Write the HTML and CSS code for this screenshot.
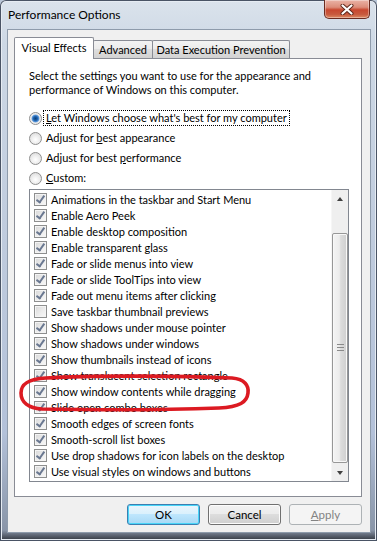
FILE: index.html
```html
<!DOCTYPE html>
<html>
<head>
<meta charset="utf-8">
<title>Performance Options</title>
<link rel="stylesheet" href="styles.css">
</head>
<body>
<div class="window">
  <div class="titlebar">
    <span class="title">Performance Options</span>
    <div class="close">
      <svg width="14" height="11" viewBox="0 0 14 11">
        <path d="M2.5 1.5 L11.5 9.5 M11.5 1.5 L2.5 9.5" stroke="#5a2418" stroke-width="4" stroke-linecap="round"/>
        <path d="M2.5 1.5 L11.5 9.5 M11.5 1.5 L2.5 9.5" stroke="#ffffff" stroke-width="2.2" stroke-linecap="round"/>
      </svg>
    </div>
  </div>
  <div class="client">
    <div class="tabs">
      <div class="tab selected tab-visual">Visual Effects</div>
      <div class="tab tab-adv">Advanced</div>
      <div class="tab tab-dep">Data Execution Prevention</div>
    </div>
    <div class="panel">
      <p class="intro">Select the settings you want to use for the appearance and performance of Windows on this computer.</p>
      <div class="radios">
        <div class="radio-row"><span class="radio checked"></span><span class="rlabel focus"><u>L</u>et Windows choose what's best for my computer</span></div>
        <div class="radio-row"><span class="radio"></span><span class="rlabel">Adjust for <u>b</u>est appearance</span></div>
        <div class="radio-row"><span class="radio"></span><span class="rlabel">Adjust for best <u>p</u>erformance</span></div>
        <div class="radio-row"><span class="radio"></span><span class="rlabel"><u>C</u>ustom:</span></div>
      </div>
      <div class="listbox">
        <div class="items">
          <div class="item"><span class="cb on"></span>Animations in the taskbar and Start Menu</div>
          <div class="item"><span class="cb on"></span>Enable Aero Peek</div>
          <div class="item"><span class="cb on"></span>Enable desktop composition</div>
          <div class="item"><span class="cb on"></span>Enable transparent glass</div>
          <div class="item"><span class="cb on"></span>Fade or slide menus into view</div>
          <div class="item"><span class="cb on"></span>Fade or slide ToolTips into view</div>
          <div class="item"><span class="cb on"></span>Fade out menu items after clicking</div>
          <div class="item"><span class="cb"></span>Save taskbar thumbnail previews</div>
          <div class="item"><span class="cb on"></span>Show shadows under mouse pointer</div>
          <div class="item"><span class="cb on"></span>Show shadows under windows</div>
          <div class="item"><span class="cb on"></span>Show thumbnails instead of icons</div>
          <div class="item"><span class="cb on"></span>Show translucent selection rectangle</div>
          <div class="item"><span class="cb on"></span>Show window contents while dragging</div>
          <div class="item"><span class="cb on"></span>Slide open combo boxes</div>
          <div class="item"><span class="cb on"></span>Smooth edges of screen fonts</div>
          <div class="item"><span class="cb on"></span>Smooth-scroll list boxes</div>
          <div class="item"><span class="cb on"></span>Use drop shadows for icon labels on the desktop</div>
          <div class="item"><span class="cb on"></span>Use visual styles on windows and buttons</div>
        </div>
        <div class="scrollbar">
          <div class="arrow"><span class="tri up"></span></div>
          <div class="track">
            <div class="thumb"><span class="grip"></span></div>
          </div>
          <div class="arrow"><span class="tri down"></span></div>
        </div>
      </div>
    </div>
    <div class="buttons">
      <div class="btn default">OK</div>
      <div class="btn">Cancel</div>
      <div class="btn disabled"><u>A</u>pply</div>
    </div>
  </div>
  <svg class="circle" width="240" height="42" viewBox="0 0 240 42">
    <path d="M30 6 C80 3 170 4 216 6 C229 7 233 14 232 21 C231 30 224 35 203 36 C150 38 80 38 26 37 C12 36 5 30 5 21 C5 12 12 7 30 6 Z" fill="none" stroke="#dc1a22" stroke-width="3.6"/>
  </svg>
</div>
</body>
</html>
```
FILE: styles.css
```css
html, body {
  margin: 0;
  padding: 0;
}
body {
  width: 377px;
  height: 541px;
  overflow: hidden;
  font-family: Lato, "Liberation Sans", sans-serif;
  font-size: 11px;
  color: #000;
  background: #b9c6d8;
}
.window {
  position: relative;
  width: 377px;
  height: 541px;
  box-sizing: border-box;
  display: flex;
  flex-direction: column;
  padding: 0 6px 8px 7px;
  border-radius: 6px 6px 0 0;
  background: linear-gradient(to bottom, #dbe3ec 0%, #cdd8e5 8%, #bfcbdd 45%, #b3c1d9 80%, #8995a8 98%, #2c3038 100%);
  box-shadow: inset 0 0 0 1px #4a5465, inset 0 0 0 2px #e6ecf3;
}
.titlebar {
  height: 29px;
  display: flex;
  align-items: flex-start;
  flex-shrink: 0;
}
.title {
  margin-top: 8px;
  margin-left: 1px;
  line-height: 14px;
  font-size: 12px;
}
.close {
  margin-left: auto;
  margin-right: 1px;
  width: 46px;
  height: 19px;
  box-sizing: border-box;
  border: 1px solid #6a2b20;
  border-top: none;
  border-radius: 0 0 5px 5px;
  background: linear-gradient(to bottom, #eab3a6 0%, #dc8d7a 40%, #c8472f 55%, #c85a3e 80%, #dd8a63 100%);
  box-shadow: inset 0 0 0 1px rgba(255,255,255,0.35);
  display: flex;
  align-items: center;
  justify-content: center;
}
.client {
  flex: 1;
  background: #f0f0f0;
  border: 1px solid #8e9bab;
  padding: 7px 8px 0 6px;
  display: flex;
  flex-direction: column;
}
.tabs {
  display: flex;
  align-items: flex-end;
  height: 21px;
}
.tab {
  box-sizing: border-box;
  height: 18px;
  border: 1px solid #898c95;
  border-bottom: none;
  border-radius: 2px 2px 0 0;
  background: linear-gradient(to bottom, #f3f3f3 0%, #ebebeb 50%, #dedede 50%, #d2d2d2 100%);
  text-align: center;
  line-height: 17px;
  margin-left: -1px;
  white-space: nowrap;
}
.tab.selected {
  height: 22px;
  margin-left: 0;
  margin-bottom: -1px;
  background: #fff;
  line-height: 19px;
  position: relative;
  z-index: 1;
}
.tab-visual { width: 80px; }
.tab-adv { width: 60px; }
.tab-dep { width: 138px; }
.panel {
  height: 439px;
  box-sizing: border-box;
  border: 1px solid #898c95;
  background: #fff;
  padding: 10px 12px 0 14px;
}
.intro {
  margin: 0;
  line-height: 14px;
  width: 300px;
}
.radios {
  margin-top: 11px;
}
.radio-row {
  height: 20px;
  display: flex;
  align-items: center;
}
.radio {
  width: 13px;
  height: 13px;
  box-sizing: border-box;
  border-radius: 50%;
  border: 1px solid #8f8f8f;
  background: radial-gradient(circle at 50% 60%, #ffffff 0%, #f0f0f0 40%, #d4d4d4 100%);
  margin-right: 1px;
  flex-shrink: 0;
}
.radio.checked {
  background: radial-gradient(circle at 50% 50%, #0b3f7a 0%, #1c5ea7 25%, #5d9be0 45%, #e6e6e6 55%, #f6f6f6 75%, #d8d8d8 100%);
}
.rlabel {
  padding: 0 2px 0 2px;
  border: 1px solid transparent;
  line-height: 14px;
  white-space: nowrap;
}
.rlabel.focus {
  border: 1px dotted #000;
}
.listbox {
  margin-top: 1px;
  height: 293px;
  width: 320px;
  box-sizing: border-box;
  border: 1px solid #828790;
  display: flex;
}
.items {
  flex: 1;
  padding: 1px 0 0 4px;
  overflow: hidden;
}
.item {
  height: 16px;
  display: flex;
  align-items: center;
  white-space: nowrap;
}
.cb {
  width: 13px;
  height: 13px;
  box-sizing: border-box;
  border: 1px solid #8e8f8f;
  background: linear-gradient(135deg, #d8d8d8 0%, #eeeeee 60%, #f8f8f8 100%);
  box-shadow: inset 0 0 0 1px #f4f4f4;
  margin-right: 4px;
  flex-shrink: 0;
  position: relative;
}
.cb.on::after {
  content: "";
  position: absolute;
  left: 3px;
  top: 0px;
  width: 3px;
  height: 7px;
  border-right: 2px solid #6a7891;
  border-bottom: 2px solid #6a7891;
  transform: rotate(35deg);
}
.scrollbar {
  width: 17px;
  display: flex;
  flex-direction: column;
  background: #efefef;
  border-left: 1px solid #f6f6f6;
  box-sizing: border-box;
}
.arrow {
  height: 17px;
  display: flex;
  align-items: center;
  justify-content: center;
}
.tri {
  width: 0;
  height: 0;
  border-left: 3.5px solid transparent;
  border-right: 3.5px solid transparent;
}
.tri.up { border-bottom: 4px solid #404040; }
.tri.down { border-top: 4px solid #404040; }
.track {
  flex: 1;
  padding-top: 26px;
  box-sizing: border-box;
}
.thumb {
  height: 230px;
  box-sizing: border-box;
  border: 1px solid #979797;
  border-radius: 2px;
  background: linear-gradient(to right, #f4f4f4 0%, #ececec 45%, #dcdcdc 55%, #cfcfcf 100%);
  box-shadow: inset 0 0 0 1px #f8f8f8;
  display: flex;
  align-items: center;
  justify-content: center;
  padding-bottom: 2px;
}
.grip {
  width: 7px;
  height: 5px;
  border-top: 1px solid #8a8a8a;
  border-bottom: 1px solid #8a8a8a;
  position: relative;
}
.grip::after {
  content: "";
  position: absolute;
  left: 0;
  right: 0;
  top: 2px;
  border-top: 1px solid #8a8a8a;
}
.buttons {
  margin-top: 7px;
  display: flex;
  justify-content: flex-end;
  gap: 8px;
}
.btn {
  width: 73px;
  height: 21px;
  box-sizing: border-box;
  border: 1px solid #707070;
  border-radius: 3px;
  background: linear-gradient(to bottom, #f2f2f2 0%, #ebebeb 50%, #dddddd 50%, #cfcfcf 100%);
  box-shadow: inset 0 0 0 1px #fcfcfc;
  text-align: center;
  line-height: 19px;
  font-size: 11.5px;
}
.btn.default {
  border-color: #3c7fb1;
  background: linear-gradient(to bottom, #eaf6fd 0%, #d9f0fc 50%, #bee6fd 50%, #a7d9f5 100%);
  box-shadow: inset 0 0 0 1px #48d5f8;
}
.btn.disabled {
  border-color: #adb2b5;
  background: #f4f4f4;
  box-shadow: none;
  color: #838383;
}
.circle {
  position: absolute;
  left: 16px;
  top: 372px;
}
```
